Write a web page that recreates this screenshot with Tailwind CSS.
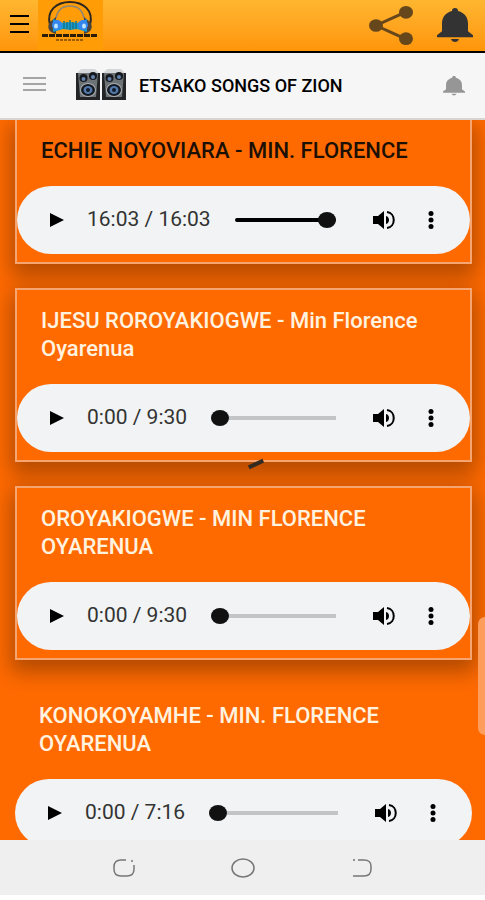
<!DOCTYPE html>
<html lang="en">
<head>
    <meta charset="UTF-8">
    <meta name="viewport" content="width=device-width, initial-scale=1.0">
    <title>Etsako Songs of Zion</title>
    <script src="https://cdn.jsdelivr.net/npm/@tailwindcss/browser@4"></script>
</head>
<body class="relative flex h-screen flex-col overflow-hidden bg-white font-['Roboto','Liberation_Sans',sans-serif]">
    <!-- shared icons -->
    <svg class="hidden">
        <symbol id="play" viewBox="0 0 16 16"><path d="M1 1v14l14-7z"/></symbol>
        <symbol id="volume" viewBox="0 0 24 20" preserveAspectRatio="none">
            <path d="M1 6h5l6-5v18l-6-5H1z"/>
            <path d="M14 6c4 1 4 7 0 8z"/>
            <path d="M15 2c9 1 9 15 0 16" fill="none" stroke="#000" stroke-width="2"/>
        </symbol>
        <symbol id="dots" viewBox="0 0 6 18"><circle cx="3" cy="2.500" r="2.500"/><circle cx="3" cy="9" r="2.500"/><circle cx="3" cy="15.500" r="2.500"/></symbol>
        <symbol id="bell" viewBox="0 0 36 36" preserveAspectRatio="none">
            <path d="M18 0c2 0 3 1 3 3 7 2 10 7 10 13v8l5 4v2H0v-2l5-4v-8C5 10 8 5 15 3c0-2 1-3 3-3z"/>
            <path d="M14 32h8c-1 4-7 4-8 0z"/>
        </symbol>
        <symbol id="speaker" viewBox="0 0 24 32" preserveAspectRatio="none">
            <path d="M1 5l4-4h14l4 4z" fill="#d5d7d8"/>
            <path d="M0 5h24v27H0z" fill="#222425"/>
            <path d="M2 5h20l-2 24H4z" fill="#6d7275"/>
            <circle cx="7.500" cy="10" r="4" fill="#15181d"/><circle cx="7.500" cy="11" r="2" fill="#6683ae"/>
            <circle cx="17" cy="8" r="4" fill="#15181d"/><circle cx="17" cy="9" r="2" fill="#6683ae"/>
            <ellipse cx="12" cy="22" rx="8" ry="7" fill="#a9b0b6"/><ellipse cx="12" cy="22" rx="7" ry="6" fill="#14181f"/>
            <ellipse cx="12" cy="22" rx="4.500" ry="4" fill="#5279ab"/><circle cx="12" cy="22" r="2" fill="#141b28"/>
        </symbol>
    </svg>

    <header class="flex h-[53px] shrink-0 items-center border-b-2 border-black bg-linear-to-b from-[#ffb62f] to-[#ff9508] pr-3 pl-[10px]">
        <button type="button" aria-label="Menu" class="flex w-[19px] flex-col gap-[6px] pb-1">
            <span class="h-[2px] bg-black"></span>
            <span class="h-[2px] bg-black"></span>
            <span class="h-[2px] bg-black"></span>
        </button>
        <a href="#" aria-label="Home" class="ml-[9px] h-full w-[65px] bg-[#ff9c06]">
            <svg viewBox="0 0 65 51" class="h-full w-full">
                <path d="M12 25C8 10 19 2 32 2s24 8 20 23" fill="none" stroke="#2b2620" stroke-width="2"/>
                <path d="M18 18C20 8 26 6 32 6s12 2 14 12" fill="none" stroke="#8d8475" stroke-width="1.500"/>
                <path d="M18 17l-6 5c-3 4-2 9 3 11l3 1zM46 17l6 5c3 4 2 9-3 11l-3 1z" fill="#4a4541"/>
                <path d="M15 19l10 4 7-1 7 1 10-4v13l-10-3-7 1-7-1-10 3z" fill="#159bd1"/>
                <ellipse cx="19" cy="25" rx="5" ry="5" fill="#3487f0"/><ellipse cx="45" cy="25" rx="5" ry="5" fill="#3487f0"/>
                <ellipse cx="18" cy="26" rx="2" ry="2.500" fill="#bfe6ff"/><ellipse cx="46" cy="26" rx="2" ry="2.500" fill="#bfe6ff"/>
                <path d="M26 21v8M29 22v7M32 20v10M35 22v7M38 21v8" stroke="#17768c" stroke-width="1.500"/>
                <path d="M4 35.500h55" stroke="#2a1c06" stroke-width="3" stroke-dasharray="6 1"/>
                <path d="M18 40h27" stroke="#a05d08" stroke-width="2" stroke-dasharray="3 1"/>
            </svg>
        </a>
        <button type="button" aria-label="Share" class="ml-auto">
            <svg viewBox="0 0 44 40" class="h-10 w-11 pb-px" fill="#66471b" preserveAspectRatio="none">
                <path d="M37 6L7 20l30 14" fill="none" stroke="#66471b" stroke-width="3"/>
                <ellipse cx="7" cy="20" rx="7" ry="6.500"/><ellipse cx="37" cy="6.500" rx="7" ry="6.500"/><ellipse cx="37" cy="33.500" rx="7" ry="6.500"/>
            </svg>
        </button>
        <button type="button" aria-label="Notifications" class="ml-6">
            <svg class="h-9 w-9 pb-px" fill="#333"><use href="#bell"/></svg>
        </button>
    </header>

    <div class="flex h-[67px] shrink-0 items-center border-b-2 border-[#d8d4d2] bg-[#f6f6f6] pr-5 pl-[23px]">
        <button type="button" aria-label="Open navigation" class="flex w-[23px] flex-col gap-1 pb-1">
            <span class="h-[2px] bg-[#a5a5a5]"></span>
            <span class="h-[2px] bg-[#a5a5a5]"></span>
            <span class="h-[2px] bg-[#a5a5a5]"></span>
        </button>
        <div class="ml-[30px] flex gap-[2px] pb-1">
            <svg class="h-8 w-6"><use href="#speaker"/></svg>
            <svg class="h-8 w-6"><use href="#speaker"/></svg>
        </div>
        <h1 class="ml-[13px] text-[18px] font-medium whitespace-nowrap text-black">ETSAKO SONGS OF ZION</h1>
        <button type="button" aria-label="Alerts" class="ml-auto">
            <svg class="h-5 w-[22px]" fill="#969696"><use href="#bell"/></svg>
        </button>
    </div>

    <main class="flex min-h-0 flex-1 flex-col gap-6 overflow-hidden bg-[#ff6a00] pr-[13px] pl-[15px]">
        <section class="shrink-0 border-2 border-t-0 border-[#f7a570] bg-[#ff6a00] pb-2 shadow-[0_8px_20px_4px_rgba(0,0,0,0.3)]">
            <h2 class="px-6 pt-[17px] pb-[21px] text-[22px] leading-7 font-medium text-[#1c1005]">ECHIE NOYOVIARA - MIN. FLORENCE</h2>
            <div class="flex h-[68px] items-center rounded-full bg-[#f1f3f4] pr-9 pl-8">
                <button type="button" aria-label="Play"><svg class="h-4 w-4"><use href="#play"/></svg></button>
                <span class="ml-[22px] text-[21px] whitespace-nowrap text-[#333]">16:03 / 16:03</span>
                <input type="range" aria-label="Seek" min="0" max="963" value="963" class="ml-6 h-4 w-0 min-w-0 flex-1 appearance-none bg-transparent [&::-webkit-slider-runnable-track]:h-1 [&::-webkit-slider-runnable-track]:rounded-full [&::-webkit-slider-runnable-track]:bg-black [&::-webkit-slider-thumb]:-mt-[6px] [&::-webkit-slider-thumb]:h-4 [&::-webkit-slider-thumb]:w-[18px] [&::-webkit-slider-thumb]:appearance-none [&::-webkit-slider-thumb]:rounded-[50%] [&::-webkit-slider-thumb]:bg-[#111]">
                <button type="button" aria-label="Mute" class="ml-9"><svg class="h-5 w-6"><use href="#volume"/></svg></button>
                <button type="button" aria-label="More options" class="ml-8"><svg class="h-[18px] w-[6px]"><use href="#dots"/></svg></button>
            </div>
        </section>

        <section class="shrink-0 border-2 border-[#f7a570] bg-[#ff6a00] pb-2 shadow-[0_8px_20px_4px_rgba(0,0,0,0.3)]">
            <h2 class="px-6 pt-[17px] pb-[21px] text-[22px] leading-7 font-medium text-[#fff3e0]">IJESU ROROYAKIOGWE - Min Florence Oyarenua</h2>
            <div class="flex h-[68px] items-center rounded-full bg-[#f1f3f4] pr-9 pl-8">
                <button type="button" aria-label="Play"><svg class="h-4 w-4"><use href="#play"/></svg></button>
                <span class="ml-[22px] text-[21px] whitespace-nowrap text-[#333]">0:00 / 9:30</span>
                <input type="range" aria-label="Seek" min="0" max="570" value="0" class="ml-6 h-4 w-0 min-w-0 flex-1 appearance-none bg-transparent [&::-webkit-slider-runnable-track]:h-1 [&::-webkit-slider-runnable-track]:bg-[#c3c4c5] [&::-webkit-slider-thumb]:-mt-[6px] [&::-webkit-slider-thumb]:h-4 [&::-webkit-slider-thumb]:w-[18px] [&::-webkit-slider-thumb]:appearance-none [&::-webkit-slider-thumb]:rounded-[50%] [&::-webkit-slider-thumb]:bg-[#111]">
                <button type="button" aria-label="Mute" class="ml-9"><svg class="h-5 w-6"><use href="#volume"/></svg></button>
                <button type="button" aria-label="More options" class="ml-8"><svg class="h-[18px] w-[6px]"><use href="#dots"/></svg></button>
            </div>
        </section>

        <section class="shrink-0 border-2 border-[#f7a570] bg-[#ff6a00] pb-2 shadow-[0_8px_20px_4px_rgba(0,0,0,0.3)]">
            <h2 class="px-6 pt-[17px] pb-[21px] text-[22px] leading-7 font-medium text-[#fff3e0]">OROYAKIOGWE - MIN FLORENCE OYARENUA</h2>
            <div class="flex h-[68px] items-center rounded-full bg-[#f1f3f4] pr-9 pl-8">
                <button type="button" aria-label="Play"><svg class="h-4 w-4"><use href="#play"/></svg></button>
                <span class="ml-[22px] text-[21px] whitespace-nowrap text-[#333]">0:00 / 9:30</span>
                <input type="range" aria-label="Seek" min="0" max="570" value="0" class="ml-6 h-4 w-0 min-w-0 flex-1 appearance-none bg-transparent [&::-webkit-slider-runnable-track]:h-1 [&::-webkit-slider-runnable-track]:bg-[#c3c4c5] [&::-webkit-slider-thumb]:-mt-[6px] [&::-webkit-slider-thumb]:h-4 [&::-webkit-slider-thumb]:w-[18px] [&::-webkit-slider-thumb]:appearance-none [&::-webkit-slider-thumb]:rounded-[50%] [&::-webkit-slider-thumb]:bg-[#111]">
                <button type="button" aria-label="Mute" class="ml-9"><svg class="h-5 w-6"><use href="#volume"/></svg></button>
                <button type="button" aria-label="More options" class="ml-8"><svg class="h-[18px] w-[6px]"><use href="#dots"/></svg></button>
            </div>
        </section>

        <section class="shrink-0 pb-2">
            <h2 class="px-6 pt-[18px] pb-[21px] text-[22px] leading-7 font-medium text-[#fff3e0]">KONOKOYAMHE - MIN. FLORENCE OYARENUA</h2>
            <div class="flex h-[68px] items-center rounded-full bg-[#f1f3f4] pr-9 pl-8">
                <button type="button" aria-label="Play"><svg class="h-4 w-4"><use href="#play"/></svg></button>
                <span class="ml-[22px] text-[21px] whitespace-nowrap text-[#333]">0:00 / 7:16</span>
                <input type="range" aria-label="Seek" min="0" max="436" value="0" class="ml-6 h-4 w-0 min-w-0 flex-1 appearance-none bg-transparent [&::-webkit-slider-runnable-track]:h-1 [&::-webkit-slider-runnable-track]:bg-[#c3c4c5] [&::-webkit-slider-thumb]:-mt-[6px] [&::-webkit-slider-thumb]:h-4 [&::-webkit-slider-thumb]:w-[18px] [&::-webkit-slider-thumb]:appearance-none [&::-webkit-slider-thumb]:rounded-[50%] [&::-webkit-slider-thumb]:bg-[#111]">
                <button type="button" aria-label="Mute" class="ml-9"><svg class="h-5 w-6"><use href="#volume"/></svg></button>
                <button type="button" aria-label="More options" class="ml-8"><svg class="h-[18px] w-[6px]"><use href="#dots"/></svg></button>
            </div>
        </section>
    </main>

    <!-- loading spinner and edge panel handle -->
    <div class="absolute top-[462px] left-[248px] h-1 w-4 -rotate-25 bg-[#332a20]"></div>
    <div class="absolute top-[617px] right-0 h-[118px] w-[7px] rounded-l-lg bg-[#ff9d5c]"></div>

    <nav class="mb-[5px] flex h-[55px] shrink-0 items-center justify-center gap-24 bg-[#efefef]">
        <button type="button" aria-label="Recent apps">
            <svg viewBox="0 0 22 20" class="h-5 w-[22px]" fill="none" stroke="#777" stroke-width="1.500"><path d="M13 2H8C3 2 1 5 1 9v2c0 4 2 7 7 7h6c5 0 7-3 7-7V7M18 3h2"/></svg>
        </button>
        <button type="button" aria-label="Home screen">
            <svg viewBox="0 0 24 20" class="h-5 w-6" fill="none" stroke="#777" stroke-width="1.500"><ellipse cx="12" cy="10" rx="11" ry="9"/></svg>
        </button>
        <button type="button" aria-label="Back">
            <svg viewBox="0 0 22 20" class="h-5 w-[22px]" fill="none" stroke="#777" stroke-width="1.500"><path d="M7 2h6c5 0 7 3 7 6v3c0 4-2 7-7 7H2M2 2h2"/></svg>
        </button>
    </nav>
</body>
</html>
